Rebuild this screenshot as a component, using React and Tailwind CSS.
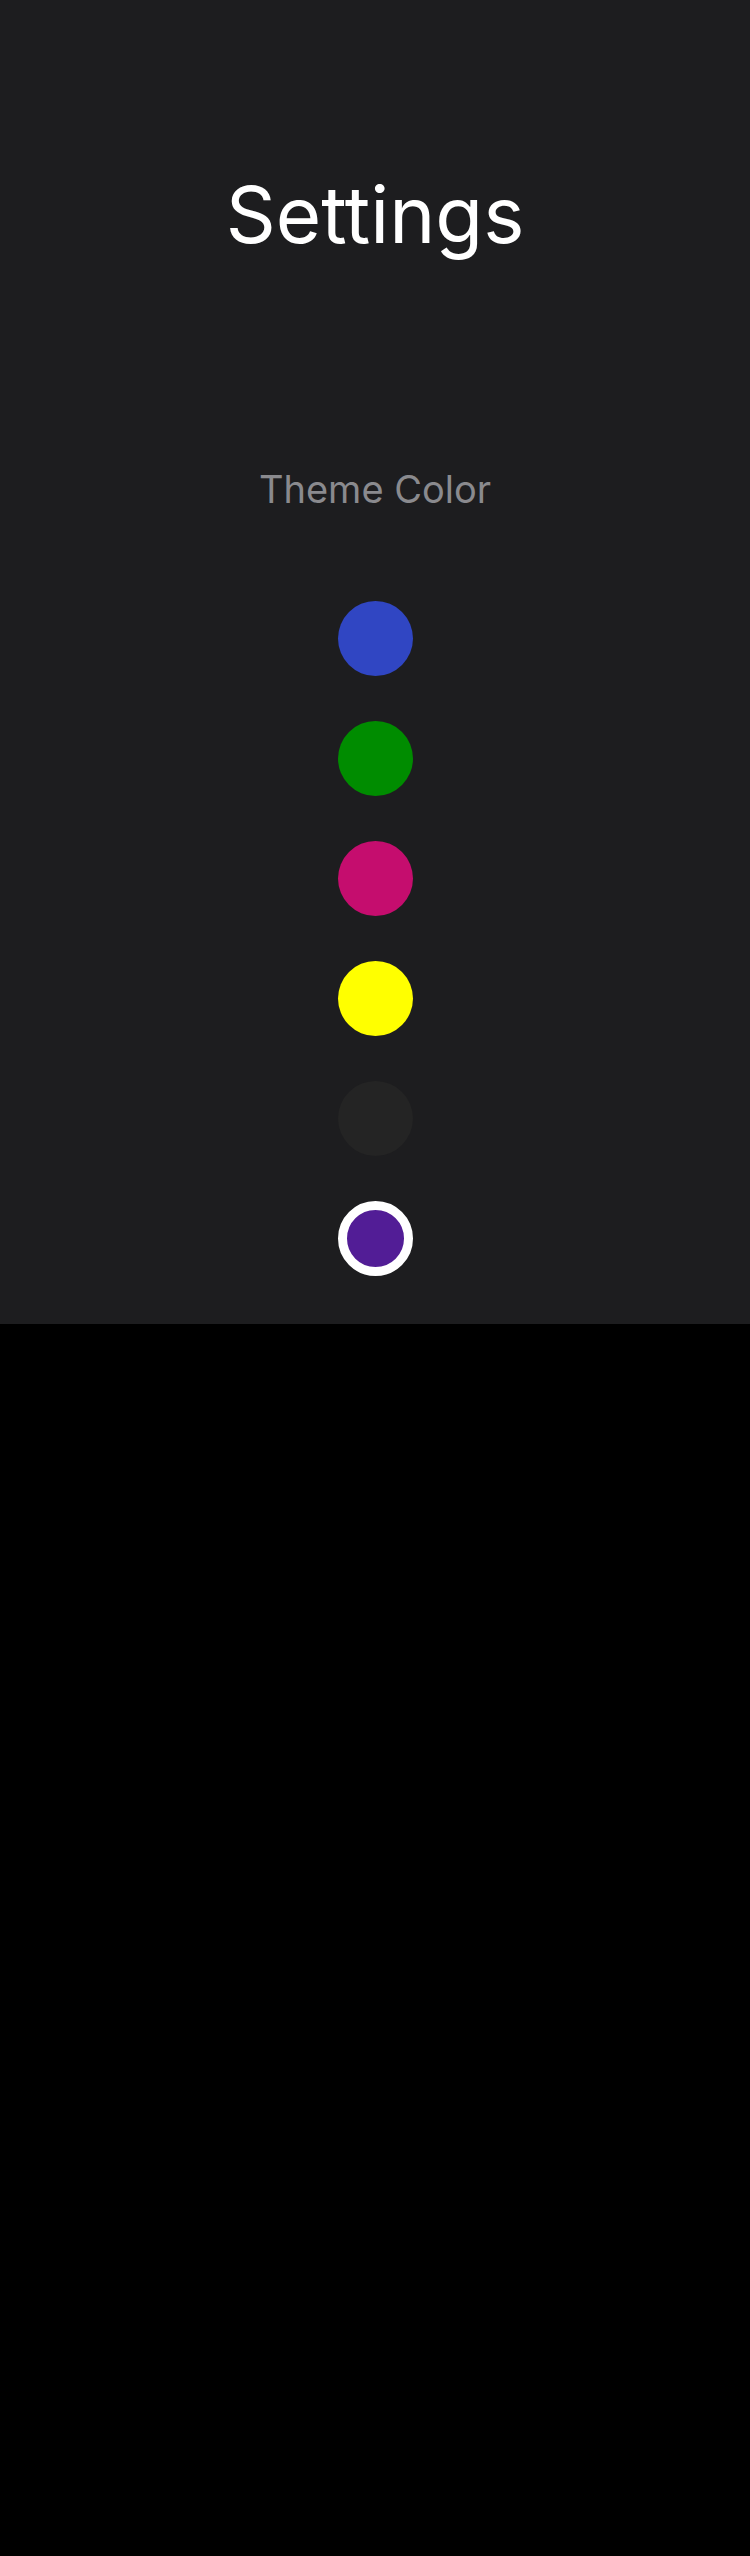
const COLORS = [
  { hex: "bg-[#3046c3]", selected: false },
  { hex: "bg-[#008c00]", selected: false },
  { hex: "bg-[#c50d6e]", selected: false },
  { hex: "bg-[#ffff00]", selected: false },
  { hex: "bg-[#242424]", selected: false },
  { hex: "bg-[#521d96]", selected: true },
];

export default function App() {
  return (
    <div className="min-h-[2556px] bg-black font-['Inter',sans-serif]">
      <section className="flex h-[1324px] flex-col items-center bg-[#1d1d1f]">
        <h1 className="mt-[176px] text-[78px] font-normal leading-none text-white">
          Settings
        </h1>

        <p className="mt-[216px] text-[38px] leading-none text-[#8a8a8e]">
          Theme Color
        </p>

        <div className="mt-[93px] flex flex-col items-center gap-[45px]">
          {COLORS.map((c, i) => (
            <button
              key={i}
              className={
                c.selected
                  ? `h-[75px] w-[75px] rounded-full border-[9px] border-white ${c.hex}`
                  : `h-[75px] w-[75px] rounded-full ${c.hex}`
              }
            />
          ))}
        </div>
      </section>
    </div>
  );
}
